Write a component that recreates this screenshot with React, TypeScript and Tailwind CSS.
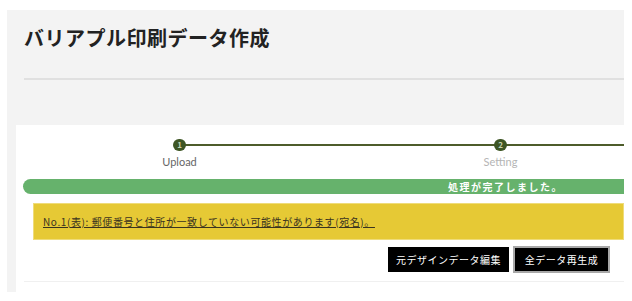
export default function App() {
  const steps = [
    { no: 1, label: "Upload", active: true },
    { no: 2, label: "Setting", active: false },
  ];

  return (
    <div className="w-[632px] h-[301px] overflow-hidden bg-white pt-[10px] pl-[7px] pr-[8px] font-['Noto_Sans_CJK_JP',sans-serif]">
      <div className="bg-[#f3f3f3] h-[282px] flex flex-col">
        {/* Header */}
        <div className="pl-[17px] pt-[13px]">
          <h1 className="text-[20px] leading-[30px] font-bold text-[#222] tracking-[0.5px]">
            バリアプル印刷データ作成
          </h1>
        </div>
        <div className="ml-[17px] mt-[25px] h-[2px] bg-[#e0e0e0]" />

        {/* Panel */}
        <div className="ml-[9px] mt-[45px] flex-1 bg-white flex flex-col overflow-hidden">
          {/* Stepper */}
          <div className="flex pl-[3px] pt-[14px]">
            {steps.map((s) => (
              <div key={s.no} className="w-[321px] shrink-0 flex flex-col items-center">
                <div className="relative w-full h-[12px] flex justify-center">
                  <div className="absolute left-1/2 w-full top-[5px] h-[2px] bg-[#4d5c2b]" />
                  <div className="relative z-10 w-[13px] h-[12px] rounded-full bg-[#3e5624] text-[8px] leading-[12px] text-[#c9d4b4] text-center font-bold">
                    {s.no}
                  </div>
                </div>
                <span
                  className={`mt-[4px] text-[11px] leading-[14px] font-['Lato',sans-serif] ${
                    s.active ? "text-[#666]" : "text-[#b5b5b5]"
                  }`}
                >
                  {s.label}
                </span>
              </div>
            ))}
          </div>

          {/* Progress */}
          <div className="ml-[7px] mt-[10px] h-[15px] rounded-l-full bg-[#66b26c] pl-[425px] flex items-center">
            <span className="text-[10px] leading-[15px] font-bold text-white tracking-[1.5px]">
              処理が完了しました。
            </span>
          </div>

          {/* Warning */}
          <div className="ml-[17px] mt-[9px] h-[37px] bg-[#e6c935] border border-[#efdc7a] flex items-center pl-[9px]">
            <span className="text-[10px] leading-[14px] text-[#3a3320] underline tracking-[0.6px]">
              No.1(表): 郵便番号と住所が一致していない可能性があります(宛名)。
            </span>
          </div>

          {/* Actions */}
          <div className="flex justify-end gap-[4px] pr-[14px] mt-[7px]">
            <button className="h-[25px] w-[121px] bg-black text-white text-[10px] tracking-[0.5px] flex items-center justify-center">
              元デザインデータ編集
            </button>
            <button className="h-[27px] -mt-[1px] w-[97px] bg-black border-2 border-[#a8a8a8] text-white text-[10px] tracking-[0.5px] flex items-center justify-center">
              全データ再生成
            </button>
          </div>

          <div className="ml-[8px] mt-[8px] h-[1px] bg-[#f0f0f0]" />
        </div>
      </div>
    </div>
  );
}
